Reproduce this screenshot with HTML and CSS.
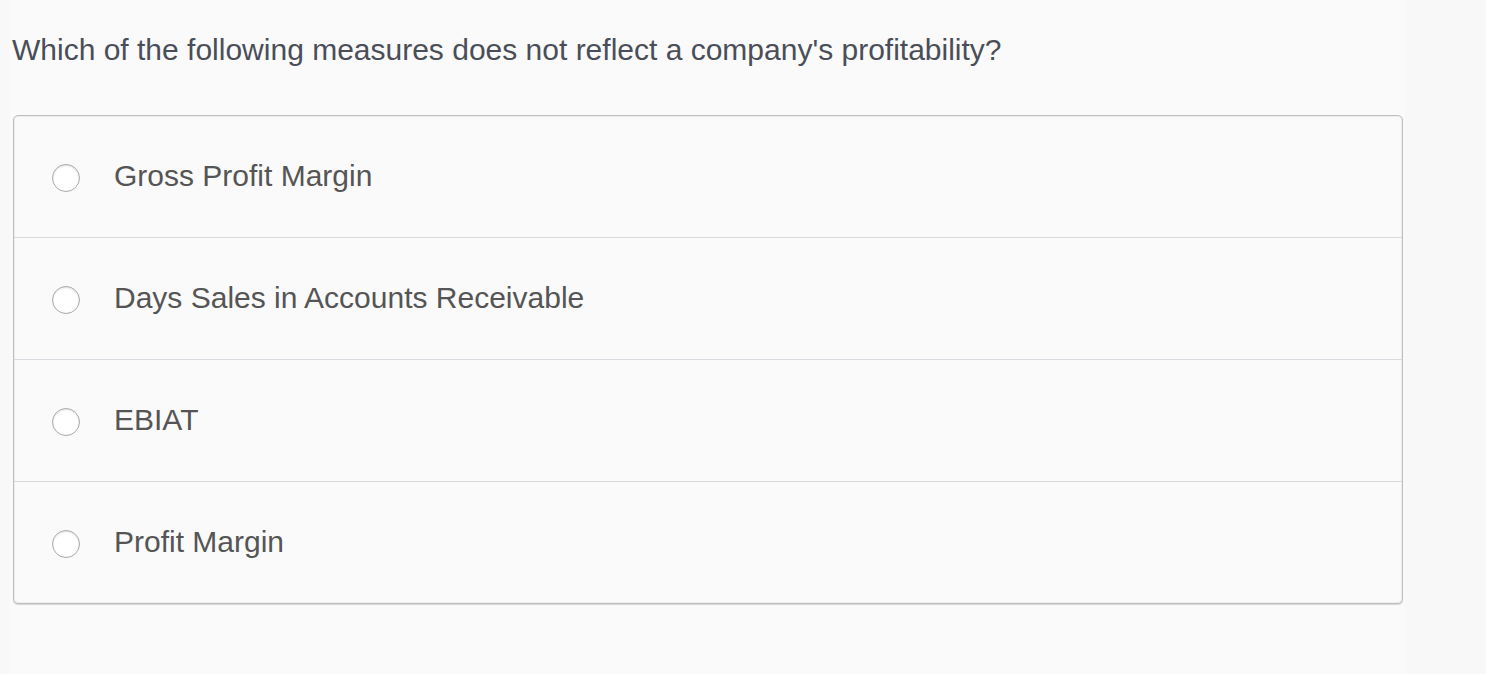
FILE: index.html
```html
<!DOCTYPE html>
<html>
<head>
<meta charset="utf-8">
<link rel="stylesheet" href="styles.css">
</head>
<body>
<div class="page">
  <div class="question">Which of the following measures does not reflect a company's profitability?</div>
  <div class="card">
    <label class="option"><span class="radio"></span><span class="label">Gross Profit Margin</span></label>
    <label class="option"><span class="radio"></span><span class="label">Days Sales in Accounts Receivable</span></label>
    <label class="option"><span class="radio"></span><span class="label">EBIAT</span></label>
    <label class="option"><span class="radio"></span><span class="label">Profit Margin</span></label>
  </div>
</div>
</body>
</html>
```
FILE: styles.css
```css
html, body {
  margin: 0;
  padding: 0;
  background: #f8f8f8;
  height: 100%;
}
body {
  font-family: "Liberation Sans", Arial, Helvetica, sans-serif;
}
.page {
  margin-left: 10px;
  width: 1395px;
  min-height: 674px;
  background: #fafafa;
  padding-top: 30px;
  box-sizing: border-box;
}
.question {
  padding-left: 2px;
  font-size: 30px;
  line-height: 40px;
  color: #4a4e58;
}
.card {
  margin-top: 45px;
  margin-left: 3px;
  width: 1390px;
  box-sizing: border-box;
  border: 1px solid #bfbfbf;
  border-radius: 5px;
  box-shadow: 0 1px 1px rgba(0,0,0,0.15), inset 0 0 1px 1px rgba(0,0,0,0.06);
  background: #fafafa;
  display: flex;
  flex-direction: column;
}
.option {
  display: flex;
  align-items: center;
  height: 122px;
  padding-bottom: 2px;
  border-top: 1px solid #d6d9dd;
  box-sizing: border-box;
}
.option:first-child {
  border-top: none;
  height: 121px;
}
.radio {
  width: 26px;
  height: 26px;
  margin-left: 38px;
  border-radius: 50%;
  border: 1px solid #a9a9a9;
  background: #fff;
  box-shadow: inset 0 1px 2px rgba(0,0,0,0.12);
  flex: none;
  position: relative;
  top: 2px;
}
.label {
  margin-left: 34px;
  font-size: 30px;
  color: #555555;
}
```
